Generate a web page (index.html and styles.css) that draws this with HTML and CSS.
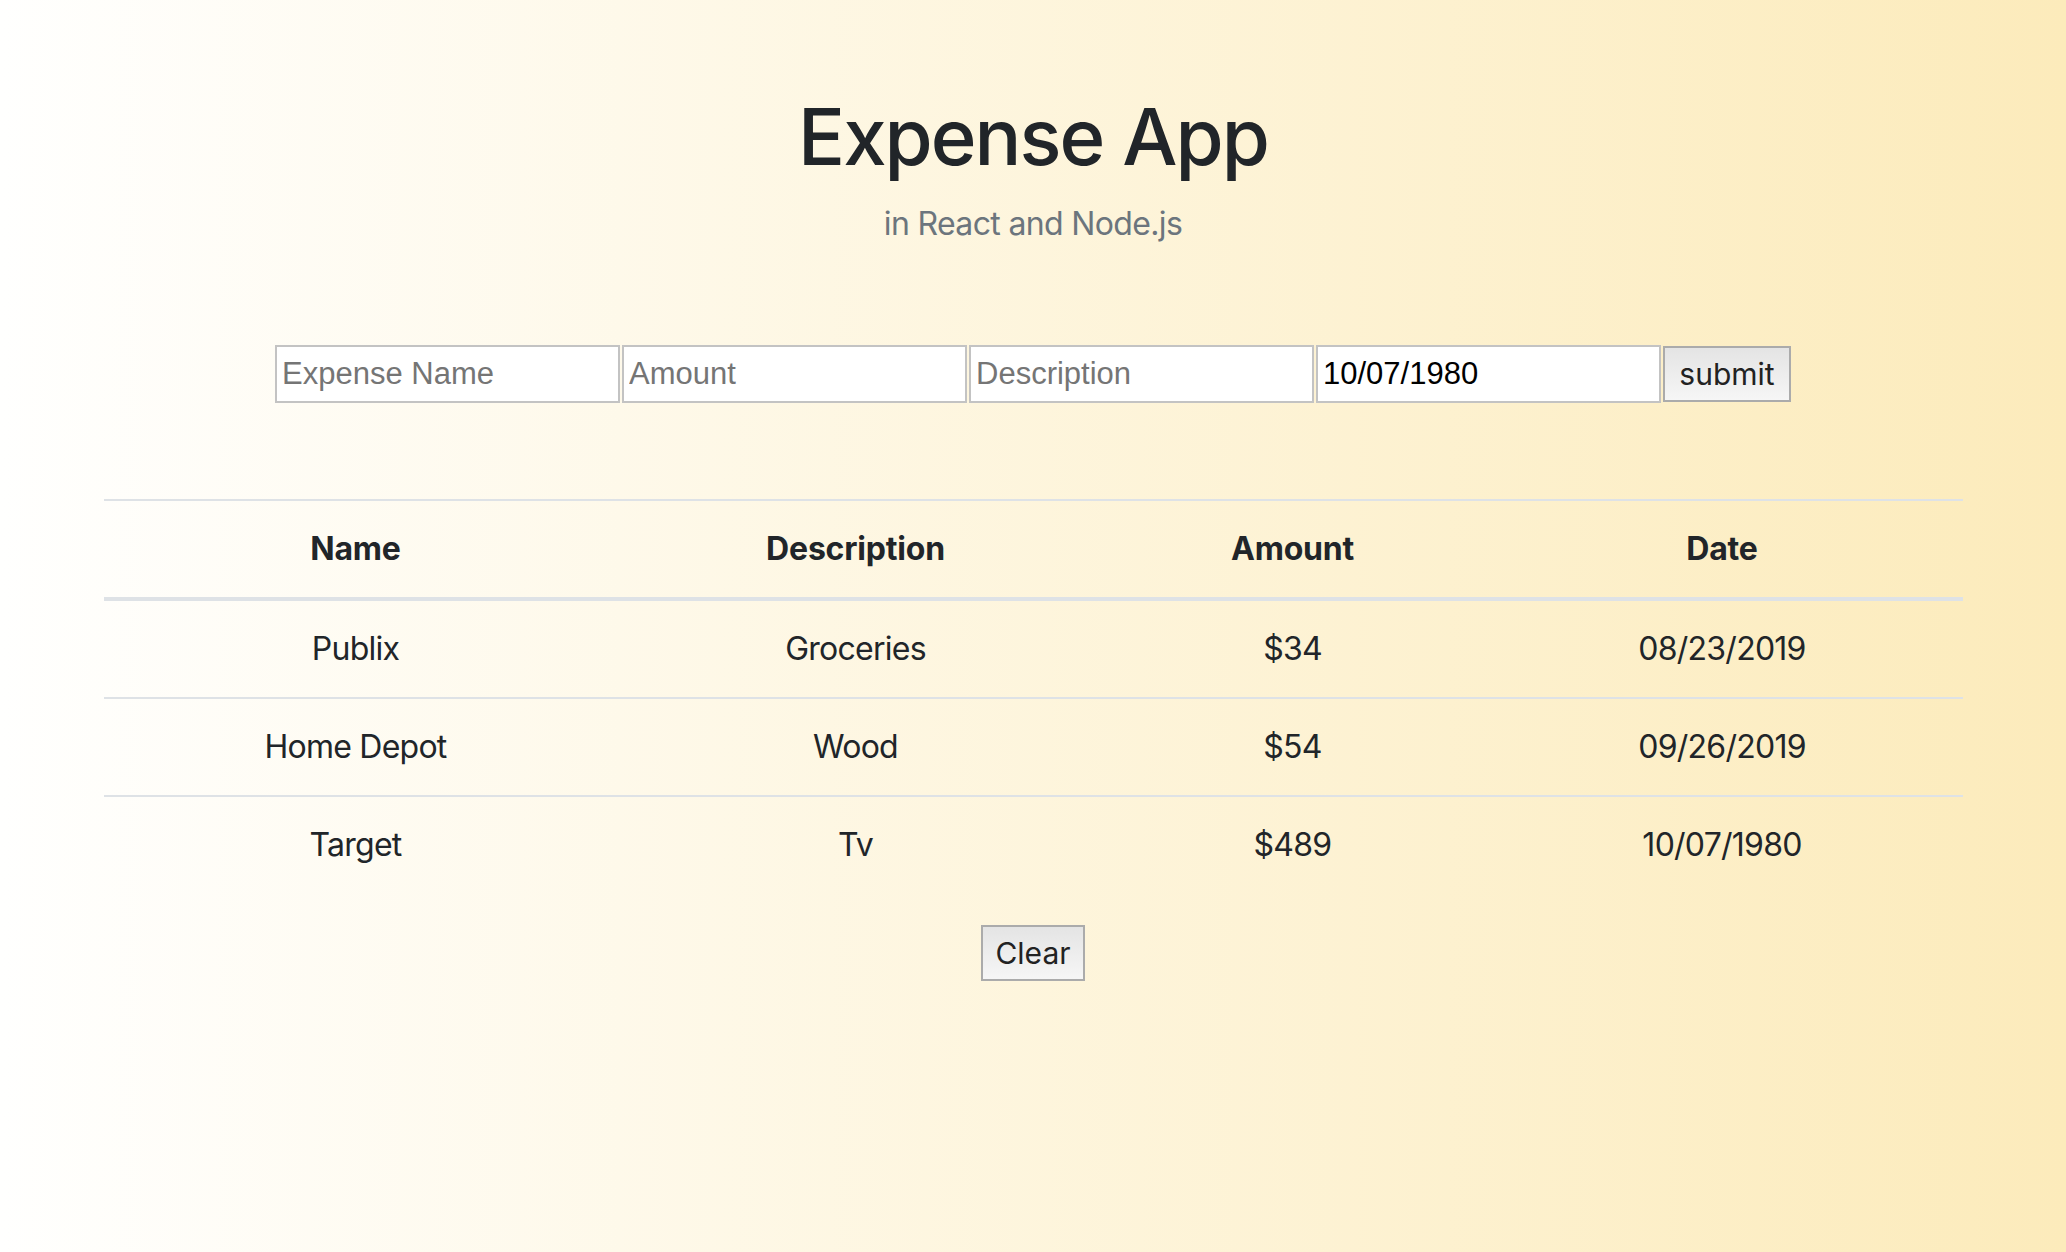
FILE: index.html
```html
<!DOCTYPE html>
<html lang="en">
<head>
<meta charset="utf-8">
<title>Expense App</title>
<link rel="stylesheet" href="styles.css">
</head>
<body>
<div class="page">
  <header class="hero">
    <h1 class="title">Expense App</h1>
    <p class="lead">in React and Node.js</p>
  </header>

  <form class="entry">
    <input class="field" type="text" placeholder="Expense Name">
    <input class="field" type="text" placeholder="Amount">
    <input class="field" type="text" placeholder="Description">
    <input class="field" type="text" value="10/07/1980">
    <button class="btn" type="button">submit</button>
  </form>

  <table class="expenses">
    <colgroup>
      <col class="c-name">
      <col class="c-desc">
      <col class="c-amount">
      <col class="c-date">
    </colgroup>
    <thead>
      <tr><th>Name</th><th>Description</th><th>Amount</th><th>Date</th></tr>
    </thead>
    <tbody>
      <tr><td>Publix</td><td>Groceries</td><td>$34</td><td>08/23/2019</td></tr>
      <tr><td>Home Depot</td><td>Wood</td><td>$54</td><td>09/26/2019</td></tr>
      <tr><td>Target</td><td>Tv</td><td>$489</td><td>10/07/1980</td></tr>
    </tbody>
  </table>

  <div class="actions">
    <button class="btn btn-clear" type="button">Clear</button>
  </div>
</div>
</body>
</html>
```

FILE: styles.css
```css
html, body {
  margin: 0;
  padding: 0;
}

body {
  min-height: 100vh;
  background: linear-gradient(to right, #fffffe 0%, #fcebbb 100%);
  font-family: Inter, "Noto Sans", "Liberation Sans", sans-serif;
  color: #212529;
}

.page {
  padding-top: 89px;
  display: flex;
  flex-direction: column;
  align-items: center;
}

.hero {
  text-align: center;
}

.title {
  margin: 0;
  font-size: 78px;
  line-height: 96px;
  font-weight: 500;
  letter-spacing: -2px;
  color: #212529;
}

.lead {
  margin: 15px 0 0;
  font-size: 32px;
  line-height: 48px;
  font-weight: 400;
  letter-spacing: -0.65px;
  color: #6c757d;
}

.entry {
  margin-top: 97px;
  display: flex;
  align-items: center;
  gap: 2px;
}

.field {
  box-sizing: border-box;
  width: 345px;
  height: 58px;
  margin: 0;
  padding: 0 5px;
  border: 2px solid #c3c3c3;
  border-radius: 0;
  background: #fff;
  font-family: "Liberation Sans", Arial, sans-serif;
  font-size: 31px;
  color: #000;
  outline: none;
}

.field::placeholder {
  color: #757575;
  opacity: 1;
}

.btn {
  box-sizing: border-box;
  height: 56px;
  margin: 0;
  padding: 0 14px;
  border: 2px solid #ababab;
  border-radius: 0;
  background: linear-gradient(to bottom, #e4e4e4, #f6f6f6);
  font-family: Inter, "Noto Sans", sans-serif;
  font-size: 30px;
  color: #222;
  cursor: pointer;
}

.entry .btn {
  width: 128px;
}

.expenses {
  margin-top: 96px;
  width: 1859px;
  border-collapse: collapse;
  border-top: 2px solid #dee2e6;
  font-size: 32px;
  line-height: 48px;
  text-align: center;
}

.c-name { width: 504px; }
.c-desc { width: 496px; }
.c-amount { width: 378px; }
.c-date { width: 481px; }

.expenses th,
.expenses td {
  padding: 24px;
  vertical-align: middle;
}

.expenses th {
  font-weight: 700;
  letter-spacing: -0.2px;
  border-bottom: 4px solid #dee2e6;
}

.expenses td {
  letter-spacing: -0.75px;
}

.expenses tbody tr + tr td {
  border-top: 2px solid #dee2e6;
}

.actions {
  margin-top: 32px;
  display: flex;
  justify-content: center;
}

.btn-clear {
  width: 104px;
  padding: 0;
}
```
